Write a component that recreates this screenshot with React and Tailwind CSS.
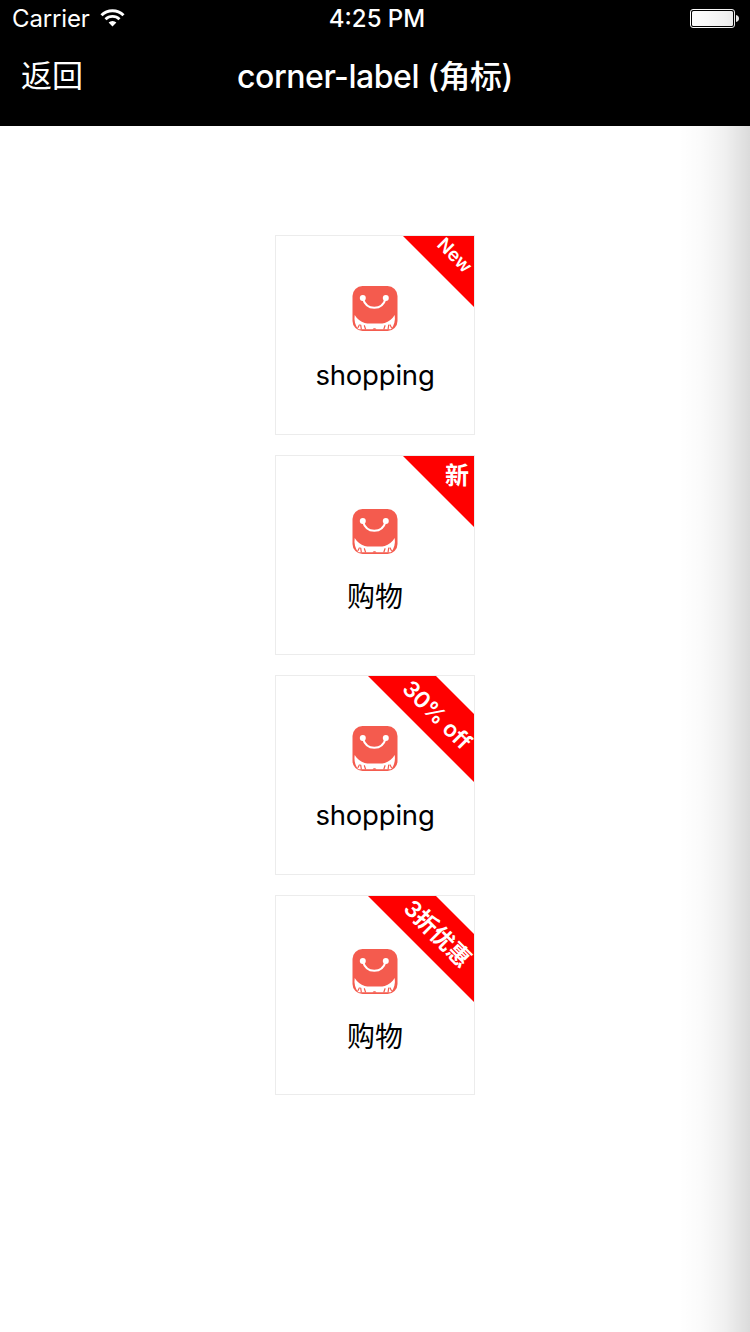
import React from "react";

const FONT = "font-[Inter,'Noto_Sans_CJK_SC',sans-serif]";

function WifiIcon() {
  return (
    <svg className="mb-[2px] h-[18px] w-[25px]" viewBox="0 0 25 18" fill="none">
      <path d="M1.500 6.200a15.600 15.600 0 0 1 22 0" stroke="#fff" strokeWidth="3" />
      <path d="M5.500 10.300a9.900 9.900 0 0 1 14 0" stroke="#fff" strokeWidth="2.800" />
      <path d="M12.500 17.500 8.600 13.600a5.500 5.500 0 0 1 7.800 0z" fill="#fff" />
    </svg>
  );
}

function BatteryIcon() {
  return (
    <svg className="mb-[1px] h-[19px] w-[49px]" viewBox="0 0 49 19" fill="none">
      <rect x="0.500" y="0.500" width="44" height="18" rx="2.500" stroke="#fff" />
      <rect x="2" y="2" width="41" height="15" rx="1.500" fill="#fff" />
      <path d="M46 6c2 .5 3 1.700 3 3.500S48 12.500 46 13z" fill="#fff" />
    </svg>
  );
}

function BagIcon() {
  return (
    <svg className="h-[46px] w-[46px] shrink-0" viewBox="0 0 46 46" fill="none">
      <rect x="0.500" y="0" width="45" height="45" rx="10" fill="#f45b4e" />
      <circle cx="10.800" cy="12" r="3" fill="#fff" />
      <circle cx="33.800" cy="12" r="3" fill="#fff" />
      <path d="M10.800 12C12.500 18.500 16.800 21.800 22.300 21.800S32.100 18.500 33.800 12" stroke="#fff" strokeWidth="2.100" />
      <path
        d="M2.700 29c2.300 3.700 6 6.700 10 8 1 .3 1.500.5 2.500.5h15c1 0 1.500-.2 2.500-.5 4-1.300 7.700-4.300 10-8 .8 5.500-.4 10.500-3.700 14.300H6.400C3.100 39.500 1.900 34.500 2.700 29z"
        fill="#fff"
      />
      <g stroke="#f45b4e" strokeWidth="1.200" strokeLinecap="round">
        <path d="M6 41.500 7.300 39M9.300 43 8.700 39.200M13.500 43 12.400 39.700" />
        <path d="M39.400 41.500 38.100 39M36.100 43 36.700 39.200M31.900 43 33 39.700" />
      </g>
      <path d="M20.500 43.500c.8-1.600 3.200-1.600 4 0z" fill="#f45b4e" />
    </svg>
  );
}

const ribbons = {
  corner: "h-[71px] w-[71px] [clip-path:polygon(0_0,100%_0,100%_100%)]",
  band: "h-[106px] w-[106px] [clip-path:polygon(0_0,68px_0,106px_38px,106px_106px)]",
};

const items = [
  { name: "shopping", latin: true, label: "New", ribbon: "corner", text: "left-[52px] top-[19px] rotate-45 text-[18.500px]" },
  { name: "购物", latin: false, label: "新", ribbon: "corner", text: "left-[54px] top-[20px] text-[24px]" },
  { name: "shopping", latin: true, label: "30% off", ribbon: "band", text: "left-[69px] top-[39px] rotate-45 text-[22.500px] tracking-[-0.2px]" },
  { name: "购物", latin: false, label: "3折优惠", ribbon: "band", text: "left-[69px] top-[38px] rotate-45 text-[23px]" },
];

function Card({ item }) {
  return (
    <div className="relative flex h-[200px] w-[200px] flex-col items-center overflow-hidden border border-[#ececec] bg-white">
      <div className={item.latin ? "pt-[50px]" : "pt-[53px]"}>
        <BagIcon />
      </div>
      <span
        className={`leading-[40px] text-black ${
          item.latin ? "mt-[23px] text-[27.500px] tracking-[-0.2px]" : "mt-[22px] text-[28px]"
        }`}
      >
        {item.name}
      </span>
      <div className={`absolute right-0 top-0 bg-[#ff0000] ${ribbons[item.ribbon]}`}>
        <span
          className={`absolute -translate-x-1/2 -translate-y-1/2 whitespace-nowrap leading-none font-semibold text-white ${item.text}`}
        >
          {item.label}
        </span>
      </div>
    </div>
  );
}

export default function App() {
  return (
    <div className={`relative flex h-[1332px] w-[750px] flex-col overflow-hidden bg-white ${FONT}`}>
      <header className="h-[126px] bg-black text-white">
        <div className="grid h-[38px] grid-cols-3 items-center px-3">
          <div className="flex items-center gap-[10px]">
            <span className="text-[24px] leading-[38px] tracking-[-0.15px]">Carrier</span>
            <WifiIcon />
          </div>
          <span className="pl-[4px] text-center text-[24px] font-medium leading-[38px]">4:25 PM</span>
          <div className="-mr-[1px] flex justify-end">
            <BatteryIcon />
          </div>
        </div>
        <div className="grid h-[76px] grid-cols-[200px_1fr_200px] items-center">
          <span className="pl-[21px] text-[31px]">返回</span>
          <h1 className="whitespace-nowrap pt-px text-center text-[32px] font-medium tracking-[-0.45px]">corner-label (角标)</h1>
        </div>
      </header>
      <main className="flex flex-1 flex-col items-center gap-5 pt-[109px]">
        {items.map((item, i) => (
          <Card key={i} item={item} />
        ))}
      </main>
      <div className="pointer-events-none absolute inset-y-0 right-0 w-[72px] bg-[linear-gradient(to_right,rgba(0,0,0,0),rgba(0,0,0,0.02)_35%,rgba(0,0,0,0.06)_65%,rgba(0,0,0,0.14))]" />
    </div>
  );
}
